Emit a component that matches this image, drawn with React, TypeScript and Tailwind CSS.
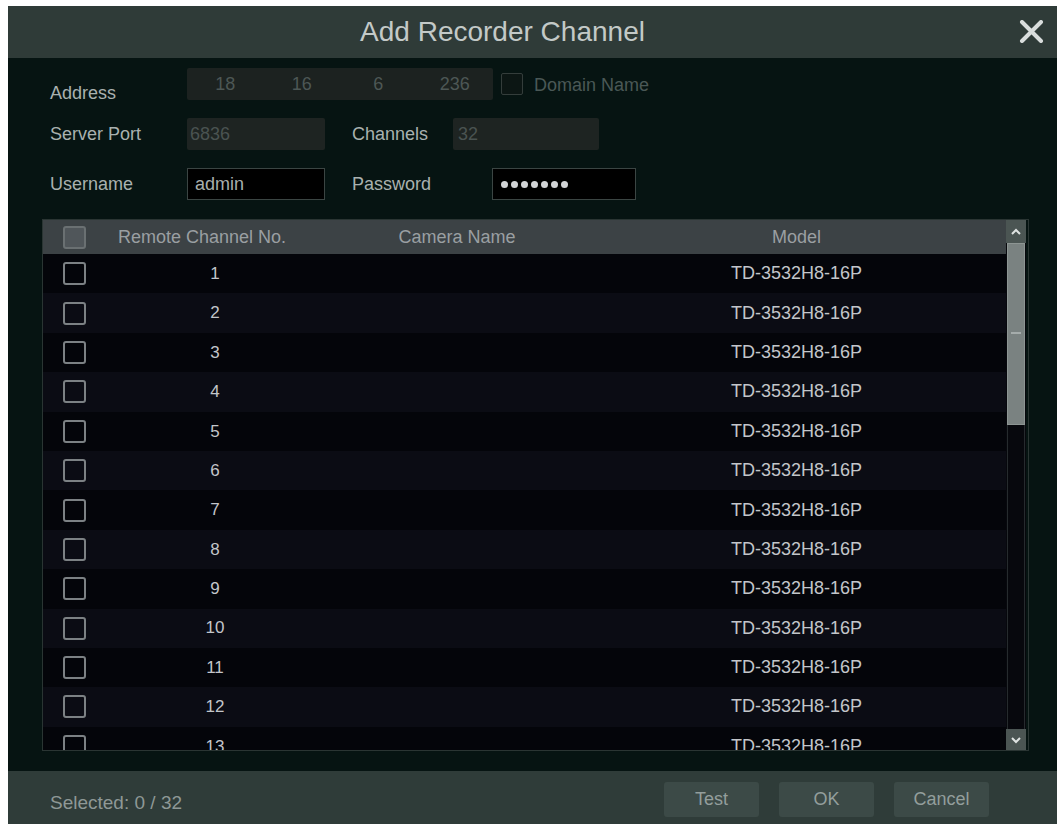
import { useState } from "react";

const rows = Array.from({ length: 13 }, (_, i) => ({
  no: i + 1,
  name: "",
  model: "TD-3532H8-16P",
}));

function Box({ checked, header }: { checked?: boolean; header?: boolean }) {
  return (
    <div
      className={`h-[23px] w-[23px] rounded-[3px] border-2 ${
        header ? "border-[#6a7072] bg-[#50565a]" : "border-[#7c8184] bg-transparent"
      }`}
    >
      {checked && <div className="m-[4px] h-[11px] w-[11px] bg-[#c9cdd0]" />}
    </div>
  );
}

export default function App() {
  const [selected] = useState<number[]>([]);

  return (
    <div className="h-[824px] w-[1062px] overflow-hidden bg-white pl-[8px] pt-[6px] font-['Liberation_Sans',Arial,sans-serif]">
      <div className="flex h-[830px] w-[1049px] flex-col bg-[#061412]">
        {/* title bar */}
        <div className="relative flex h-[52px] items-center justify-center bg-[#2f3b38] pr-[60px]">
          <span className="text-[28px] text-[#c3c9c7]">Add Recorder Channel</span>
          <svg className="absolute right-[13px] top-[14px]" width="25" height="23" viewBox="0 0 25 23">
            <path d="M3 2 L22 21 M22 2 L3 21" stroke="#d9dddc" strokeWidth="4" strokeLinecap="round" />
          </svg>
        </div>

        {/* form */}
        <div className="flex flex-col gap-[18px] pl-[42px] pt-[10px] text-[18px]">
          <div className="flex h-[32px] items-start">
            <span className="mt-[12px] w-[137px] text-[#a9b1af]">Address</span>
            <div className="flex h-[32px] w-[306px] items-center rounded-[2px] bg-[#1c2220] text-[#4d5755]">
              {["18", "16", "6", "236"].map((v) => (
                <span key={v} className="flex-1 text-center">
                  {v}
                </span>
              ))}
            </div>
            <div className="ml-[8px] mt-[5px] h-[22px] w-[22px] rounded-[2px] border border-[#343d3b] bg-[#0c1614]" />
            <span className="ml-[11px] mt-[4px] text-[#4a5856]">Domain Name</span>
          </div>

          <div className="flex h-[32px] items-center">
            <span className="w-[137px] text-[#a9b1af]">Server Port</span>
            <div className="flex h-[32px] w-[138px] items-center rounded-[2px] bg-[#1e2422] pl-[3px] text-[#4a5351]">6836</div>
            <span className="ml-[27px] w-[101px] text-[#a9b1af]">Channels</span>
            <div className="flex h-[32px] w-[146px] items-center rounded-[2px] bg-[#1e2422] pl-[5px] text-[#4a5351]">32</div>
          </div>

          <div className="flex h-[32px] items-center">
            <span className="w-[137px] text-[#a9b1af]">Username</span>
            <div className="flex h-[32px] w-[138px] items-center border border-[#3b4543] bg-black pl-[7px] text-[#a8afad]">admin</div>
            <span className="ml-[27px] w-[140px] text-[#a9b1af]">Password</span>
            <div className="flex h-[32px] w-[144px] items-center gap-[3px] border border-[#3b4543] bg-black pl-[8px]">
              {Array.from({ length: 7 }).map((_, i) => (
                <span key={i} className="h-[7px] w-[7px] rounded-full bg-[#d2d4d6]" />
              ))}
            </div>
          </div>
        </div>

        {/* table */}
        <div className="ml-[34px] mt-[19px] flex h-[532px] w-[987px] overflow-hidden border border-[#2a3533] text-[18px]">
          <div className="flex-1 overflow-hidden">
            <div className="flex h-[34px] items-center bg-[#3c4245] text-[#9a9fa2]">
              <div className="w-[60px] pl-[20px]">
                <Box header />
              </div>
              <div className="w-[224px] pr-[26px] text-center">Remote Channel No.</div>
              <div className="w-[260px] text-center">Camera Name</div>
              <div className="flex-1 text-center">Model</div>
            </div>
            {rows.map((r, i) => (
              <div
                key={r.no}
                className={`flex h-[39.4px] items-center text-[#c3c6ca] ${i % 2 === 0 ? "bg-[#04050a]" : "bg-[#0b0c14]"}`}
              >
                <div className="w-[60px] pl-[20px]">
                  <Box checked={selected.includes(r.no)} />
                </div>
                <div className="w-[224px] text-center text-[17px]">{r.no}</div>
                <div className="w-[260px] text-center">{r.name}</div>
                <div className="flex-1 text-center">{r.model}</div>
              </div>
            ))}
          </div>

          {/* scrollbar */}
          <div className="mr-[2px] flex w-[20px] flex-col bg-[#07080d]">
            <div className="flex h-[23px] items-center justify-center bg-[#4b5553]">
              <svg width="12" height="8" viewBox="0 0 12 8">
                <path d="M2 6 L6 2 L10 6" stroke="#dfe3e2" strokeWidth="2" fill="none" />
              </svg>
            </div>
            <div className="relative mx-[1px] h-[182px] border border-[#8d9593] bg-[#7a8281]">
              <div className="absolute left-[3px] right-[3px] top-[88px] h-[2px] bg-[#a5acab]" />
            </div>
            <div className="mx-[1px] flex-1 border-x border-[#262b2e]" />
            <div className="flex h-[21px] items-center justify-center bg-[#4b5553]">
              <svg width="12" height="8" viewBox="0 0 12 8">
                <path d="M2 2 L6 6 L10 2" stroke="#dfe3e2" strokeWidth="2" fill="none" />
              </svg>
            </div>
          </div>
        </div>

        {/* footer */}
        <div className="mt-[20px] flex h-[56px] items-start bg-[#2f3c39] pl-[42px] pr-[68px] pt-[11px] text-[18px]">
          <span className="mt-[7px] text-[19px] text-[#8e9896]">Selected: 0 / 32</span>
          <div className="ml-auto flex gap-[20px]">
            {["Test", "OK", "Cancel"].map((b) => (
              <button
                key={b}
                className="flex h-[35px] w-[95px] items-center justify-center rounded-[3px] bg-[#3c4a47] text-[#939e9c]"
              >
                {b}
              </button>
            ))}
          </div>
        </div>
      </div>
    </div>
  );
}
